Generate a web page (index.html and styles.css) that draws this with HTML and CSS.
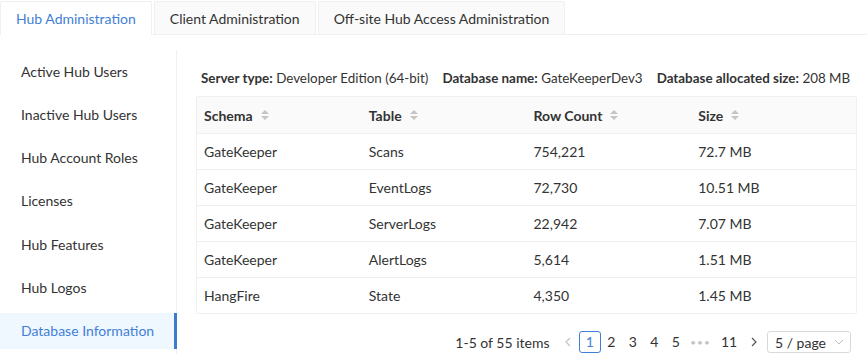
FILE: index.html
```html
<!DOCTYPE html>
<html lang="en">
<head>
    <meta charset="UTF-8">
    <title>Hub Administration</title>
    <link rel="stylesheet" href="styles.css">
</head>
<body>
    <div class="tabs">
        <div class="tab active">Hub Administration</div>
        <div class="tab">Client Administration</div>
        <div class="tab">Off-site Hub Access Administration</div>
    </div>

    <div class="layout">
        <ul class="menu">
            <li class="menu-item">Active Hub Users</li>
            <li class="menu-item">Inactive Hub Users</li>
            <li class="menu-item">Hub Account Roles</li>
            <li class="menu-item">Licenses</li>
            <li class="menu-item">Hub Features</li>
            <li class="menu-item">Hub Logos</li>
            <li class="menu-item selected">Database Information</li>
        </ul>

        <div class="content">
            <div class="info">
                <span><b>Server type:</b> Developer Edition (64-bit)</span>
                <span><b>Database name:</b> GateKeeperDev3</span>
                <span><b>Database allocated size:</b> 208 MB</span>
            </div>

            <table class="grid">
                <thead>
                    <tr>
                        <th><span class="th">Schema <i class="sorter"></i></span></th>
                        <th><span class="th">Table <i class="sorter"></i></span></th>
                        <th><span class="th">Row Count <i class="sorter"></i></span></th>
                        <th><span class="th">Size <i class="sorter"></i></span></th>
                    </tr>
                </thead>
                <tbody>
                    <tr><td>GateKeeper</td><td>Scans</td><td>754,221</td><td>72.7 MB</td></tr>
                    <tr><td>GateKeeper</td><td>EventLogs</td><td>72,730</td><td>10.51 MB</td></tr>
                    <tr><td>GateKeeper</td><td>ServerLogs</td><td>22,942</td><td>7.07 MB</td></tr>
                    <tr><td>GateKeeper</td><td>AlertLogs</td><td>5,614</td><td>1.51 MB</td></tr>
                    <tr><td>HangFire</td><td>State</td><td>4,350</td><td>1.45 MB</td></tr>
                </tbody>
            </table>

            <div class="pager">
                <span class="total">1-5 of 55 items</span>
                <span class="page arrow disabled">
                    <svg width="8" height="10" viewBox="0 0 8 10"><path d="M6 1 L2 5 L6 9" fill="none" stroke="currentColor" stroke-width="1.2"/></svg>
                </span>
                <span class="page current">1</span>
                <span class="page">2</span>
                <span class="page">3</span>
                <span class="page">4</span>
                <span class="page">5</span>
                <span class="page dots">•••</span>
                <span class="page wide">11</span>
                <span class="page arrow">
                    <svg width="8" height="10" viewBox="0 0 8 10"><path d="M2 1 L6 5 L2 9" fill="none" stroke="currentColor" stroke-width="1.2"/></svg>
                </span>
                <span class="size-select">5 / page
                    <svg width="10" height="6" viewBox="0 0 10 6"><path d="M1 1 L5 5 L9 1" fill="none" stroke="currentColor" stroke-width="1"/></svg>
                </span>
            </div>
        </div>
    </div>
</body>
</html>
```

FILE: styles.css
```css
body, html {
    margin: 0;
    background: #fff;
    font-family: 'Lato', 'Segoe UI', sans-serif;
    font-size: 14px;
    color: rgba(0, 0, 0, 0.85);
}
.tabs {
    display: flex;
    gap: 2px;
    padding-top: 1px;
    border-bottom: 1px solid #f0f0f0;
    box-sizing: border-box;
    height: 35px;
}
.tab {
    padding: 0 15px;
    line-height: 33px;
    background: #fafafa;
    border: 1px solid #f0f0f0;
    border-bottom: none;
    border-radius: 2px 2px 0 0;
    color: #333;
}
.tab.active {
    background: #fff;
    color: #3f7fd6;
    margin-bottom: -1px;
    line-height: 34px;
}
.layout {
    display: flex;
    margin-top: 15px;
}
.menu {
    list-style: none;
    margin: 0;
    padding: 4px 0;
    width: 177px;
    box-sizing: border-box;
    border-right: 1px solid #f0f0f0;
    display: flex;
    flex-direction: column;
    gap: 7.17px;
}
.menu-item {
    height: 36px;
    line-height: 36px;
    padding-left: 21px;
    color: #333;
}
.menu-item.selected {
    background: #eff7ff;
    color: #3f7fd6;
    margin-right: -1px;
    border-right: 3px solid #3d7bd0;
}
.content {
    padding: 18px 0 0 19px;
    width: 661px;
}
.info {
    display: flex;
    gap: 14px;
    padding-left: 5px;
    height: 20px;
    line-height: 20px;
    font-size: 13.4px;
    color: #333;
    white-space: nowrap;
}
.info span {
    flex-shrink: 0;
}
.info b {
    font-weight: 700;
}
.grid {
    width: 661px;
    margin-top: 8px;
    border-collapse: separate;
    border-spacing: 0;
    border: 1px solid #f0f0f0;
    border-radius: 2px;
    table-layout: fixed;
}
.grid th, .grid td {
    text-align: left;
    padding: 0 7px;
    height: 35px;
    border-bottom: 1px solid #f0f0f0;
    color: #333;
}
.grid th {
    background: #fafafa;
    font-weight: 700;
    height: 36px;
}
.grid tbody tr:last-child td {
    border-bottom: none;
}
.th {
    display: inline-flex;
    align-items: center;
    gap: 8px;
}
.sorter {
    display: inline-block;
    position: relative;
    width: 8px;
    height: 10px;
}
.sorter::before, .sorter::after {
    content: '';
    position: absolute;
    left: 0;
    border-left: 4px solid transparent;
    border-right: 4px solid transparent;
}
.sorter::before {
    top: 0;
    border-bottom: 4px solid #c4c4c4;
}
.sorter::after {
    bottom: 0;
    border-top: 4px solid #c4c4c4;
}
.pager {
    display: flex;
    align-items: center;
    justify-content: flex-end;
    margin-top: 16px;
    padding-right: 6px;
    height: 24px;
    color: #333;
}
.total {
    margin-right: 8px;
}
.page {
    min-width: 21.5px;
    height: 22px;
    line-height: 20px;
    text-align: center;
    box-sizing: border-box;
    border: 1px solid transparent;
    border-radius: 3px;
}
.page.current {
    border-color: #3f7fd6;
    color: #3f7fd6;
}
.page.wide {
    min-width: 29px;
}
.page.dots {
    color: #c4c4c4;
    font-size: 10px;
    letter-spacing: 1px;
    min-width: 28px;
}
.page.arrow {
    display: flex;
    align-items: center;
    justify-content: center;
    color: #555;
}
.page.arrow.disabled {
    color: #c4c4c4;
}
.size-select {
    margin-left: 2px;
    height: 22px;
    width: 84px;
    box-sizing: border-box;
    border: 1px solid #d9d9d9;
    border-radius: 3px;
    display: flex;
    align-items: center;
    justify-content: space-between;
    padding: 0 6px 0 7px;
    color: #333;
}
.size-select svg {
    color: #bfbfbf;
}
```
